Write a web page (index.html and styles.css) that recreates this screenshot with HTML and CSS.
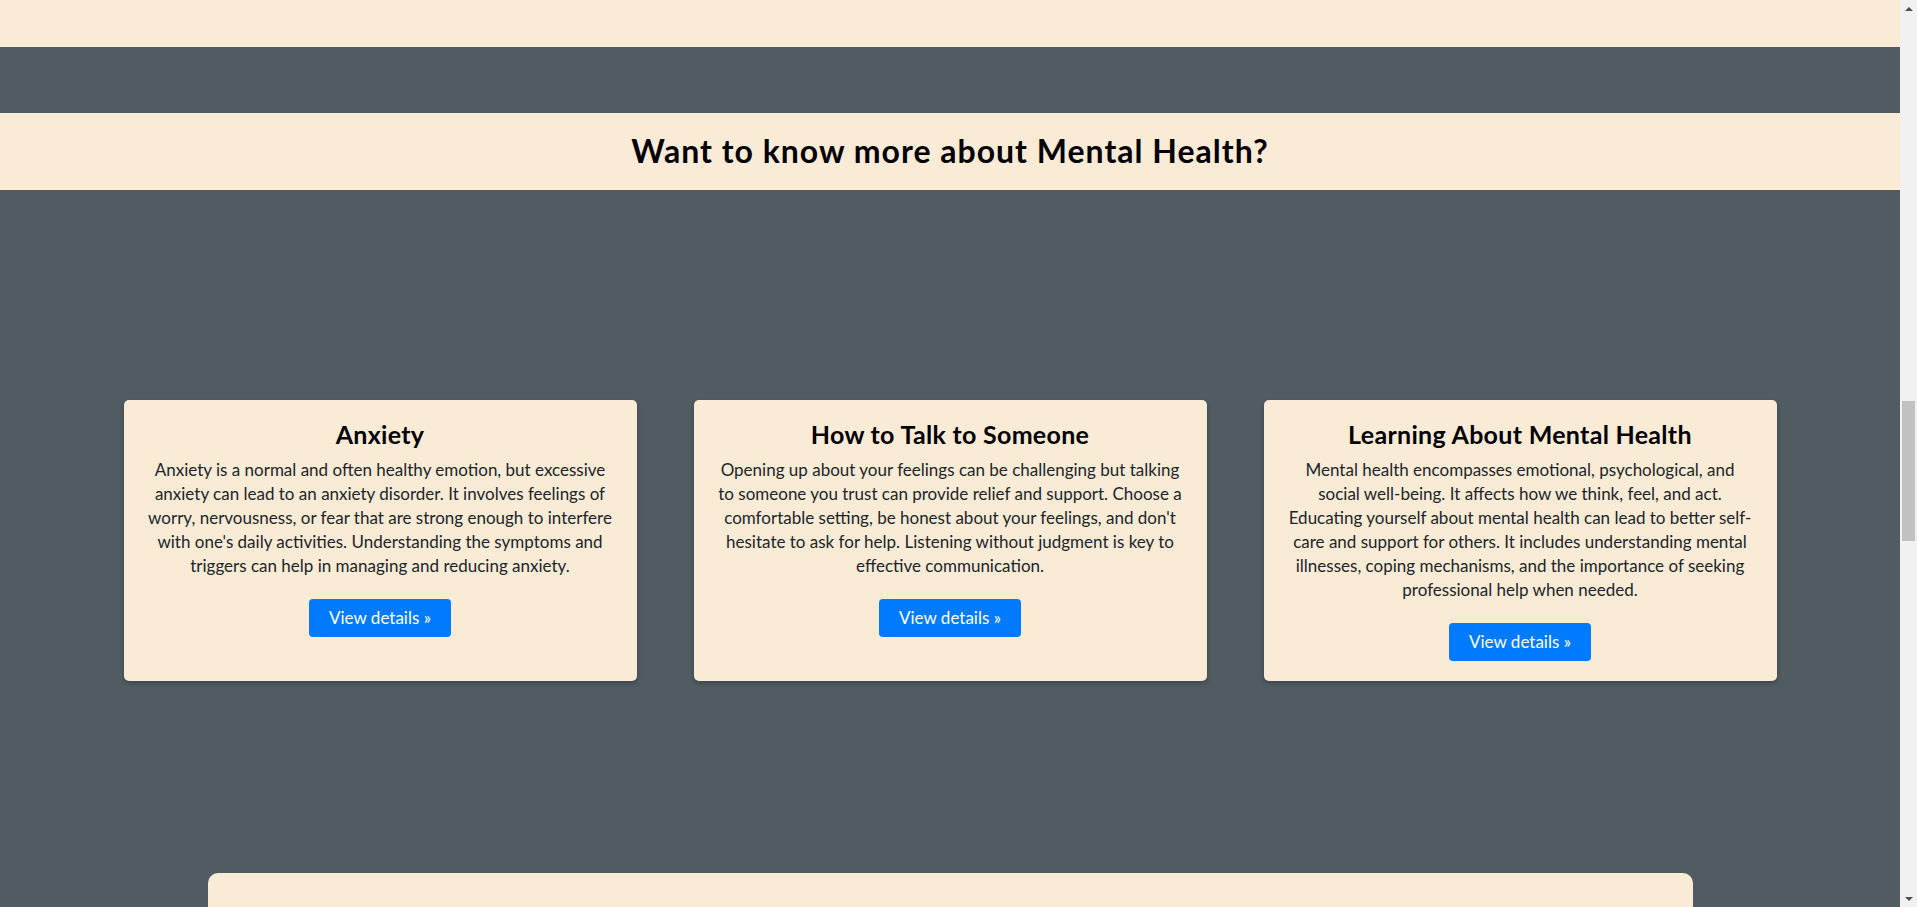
FILE: index.html
```html
<!DOCTYPE html>
<html lang="en">
<head>
<meta charset="utf-8">
<title>Mental Health</title>
<link rel="stylesheet" href="styles.css">
</head>
<body>
  <div class="page">
    <div class="prev-section"></div>

    <header class="section-title">
      <h2>Want to know more about Mental Health?</h2>
    </header>

    <section class="topics">
      <div class="cards">
        <article class="card">
          <h3>Anxiety</h3>
          <p>Anxiety is a normal and often healthy emotion, but excessive anxiety can lead to an anxiety disorder. It involves feelings of worry, nervousness, or fear that are strong enough to interfere with one's daily activities. Understanding the symptoms and triggers can help in managing and reducing anxiety.</p>
          <div><a class="btn" href="#">View details &raquo;</a></div>
        </article>
        <article class="card">
          <h3>How to Talk to Someone</h3>
          <p>Opening up about your feelings can be challenging but talking to someone you trust can provide relief and support. Choose a comfortable setting, be honest about your feelings, and don't hesitate to ask for help. Listening without judgment is key to effective communication.</p>
          <div><a class="btn" href="#">View details &raquo;</a></div>
        </article>
        <article class="card">
          <h3>Learning About Mental Health</h3>
          <p>Mental health encompasses emotional, psychological, and social well-being. It affects how we think, feel, and act. Educating yourself about mental health can lead to better self-care and support for others. It includes understanding mental illnesses, coping mechanisms, and the importance of seeking professional help when needed.</p>
          <div><a class="btn" href="#">View details &raquo;</a></div>
        </article>
      </div>
    </section>

    <section class="panel"></section>
  </div>

  <div class="scrollbar" aria-hidden="true">
    <span class="arrow arrow-up"></span>
    <span class="track"><span class="thumb"></span></span>
    <span class="arrow arrow-down"></span>
  </div>
</body>
</html>
```

FILE: styles.css
```css
html, body {
  margin: 0;
  padding: 0;
}

body {
  background: #505b62;
  font-family: "Lato", "Open Sans", sans-serif;
  color: #212529;
  overflow: hidden;
}

.page {
  width: calc(100% - 17px);
}

.prev-section {
  height: 47px;
  background: #faebd7;
}

.section-title {
  margin-top: 66px;
  height: 77px;
  background: #faebd7;
  display: flex;
  align-items: center;
  justify-content: center;
}

.section-title h2 {
  margin: 0;
  font-size: 32px;
  font-weight: 700;
  letter-spacing: 1px;
  color: #000;
  line-height: 1.2;
}

.topics {
  padding: 210px 0 192px;
}

.cards {
  display: flex;
  justify-content: center;
  gap: 57px;
}

.card {
  width: 513px;
  box-sizing: border-box;
  padding: 20px;
  background: #faebd7;
  border-radius: 5px;
  box-shadow: 0 2px 4px rgba(0, 0, 0, 0.25);
  text-align: center;
}

.card h3 {
  margin: 0 0 9px;
  font-size: 25px;
  line-height: 29px;
  letter-spacing: 0.3px;
  font-weight: 700;
  color: #000;
}

.card p {
  margin: 0 0 21px;
  font-size: 17px;
  line-height: 24px;
}

.btn {
  display: inline-block;
  padding: 7px 20px;
  background: #007bff;
  color: #fff;
  text-decoration: none;
  font-size: 17px;
  line-height: 24px;
  border-radius: 4px;
}

.panel {
  width: 1485px;
  height: 400px;
  margin: 0 auto;
  background: #faebd7;
  border-radius: 10px 10px 0 0;
}

/* emulated browser scrollbar */
.scrollbar {
  position: fixed;
  top: 0;
  right: 0;
  bottom: 0;
  width: 17px;
  background: #f1f1f1;
  display: flex;
  flex-direction: column;
}

.arrow {
  height: 17px;
  display: flex;
  align-items: center;
  justify-content: center;
}

.arrow::before {
  content: "";
  width: 0;
  height: 0;
  border-left: 4px solid transparent;
  border-right: 4px solid transparent;
}

.arrow-up::before {
  border-bottom: 4px solid #505050;
}

.arrow-down::before {
  border-top: 4px solid #505050;
}

.track {
  flex: 1;
  padding: 384px 2px 0;
}

.thumb {
  display: block;
  height: 140px;
  background: #c1c1c1;
}
```
